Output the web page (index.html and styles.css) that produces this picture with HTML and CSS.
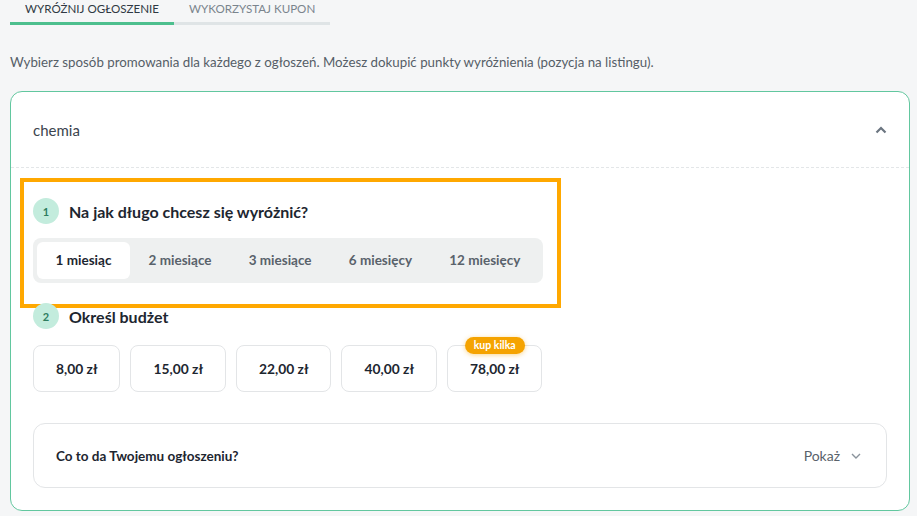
FILE: index.html
```
<!DOCTYPE html>
<html lang="pl">
<head>
    <meta charset="UTF-8">
    <meta name="viewport" content="width=device-width, initial-scale=1.0">
    <title>Wyróżnij ogłoszenie</title>
    <link rel="stylesheet" href="styles.css">
</head>
<body>

<div class="page">
    <div class="tabs">
        <div class="tab active">Wyróżnij ogłoszenie</div>
        <div class="tab">Wykorzystaj kupon</div>
    </div>

    <p class="intro">Wybierz sposób promowania dla każdego z ogłoszeń. Możesz dokupić punkty wyróżnienia (pozycja na listingu).</p>

    <div class="card">
        <div class="card-header">
            <span class="card-title">chemia</span>
            <svg class="chevron" width="12" height="8" viewBox="0 0 12 8"><path d="M1.5 6.5 L6 2 L10.5 6.5" fill="none" stroke="#6b7580" stroke-width="2.2"/></svg>
        </div>

        <div class="card-body">
            <div class="step highlighted">
                <div class="step-head">
                    <span class="step-num">1</span>
                    <span class="step-title">Na jak długo chcesz się wyróżnić?</span>
                </div>
                <div class="segments">
                    <div class="segment selected">1 miesiąc</div>
                    <div class="segment">2 miesiące</div>
                    <div class="segment">3 miesiące</div>
                    <div class="segment">6 miesięcy</div>
                    <div class="segment">12 miesięcy</div>
                </div>
            </div>

            <div class="step">
                <div class="step-head">
                    <span class="step-num">2</span>
                    <span class="step-title">Określ budżet</span>
                </div>
                <div class="budgets">
                    <div class="budget">8,00 zł</div>
                    <div class="budget">15,00 zł</div>
                    <div class="budget">22,00 zł</div>
                    <div class="budget">40,00 zł</div>
                    <div class="budget">78,00 zł<span class="badge">kup kilka</span></div>
                </div>
            </div>

            <div class="info">
                <span class="info-title">Co to da Twojemu ogłoszeniu?</span>
                <span class="info-toggle">Pokaż
                    <svg width="10" height="6" viewBox="0 0 10 6"><path d="M1 1 L5 5 L9 1" fill="none" stroke="#8a939c" stroke-width="1.4"/></svg>
                </span>
            </div>
        </div>
    </div>
</div>

</body>
</html>
```

FILE: styles.css
```
body {
    font-family: Lato, "Noto Sans", sans-serif;
    background-color: #f5f6f7;
    color: #1d2630;
    margin: 0;
    padding: 0;
}

.page {
    padding: 0 7px 0 10px;
}

.tabs {
    display: flex;
    width: 319px;
}

.tab {
    flex: 1 1 auto;
    padding: 2px 15px 7px;
    font-size: 11.6px;
    text-align: center;
    text-transform: uppercase;
    color: #7a848d;
    border-bottom: 3px solid #dfe4e6;
    white-space: nowrap;
}

.tab.active {
    color: #2f3943;
    border-bottom-color: #4dbf8e;
}

.intro {
    margin: 29px 0 21px;
    font-size: 13.3px;
    color: #555e67;
}

.card {
    background-color: #ffffff;
    border: 1px solid #62c79f;
    border-radius: 12px;
}

.card-header {
    display: flex;
    align-items: center;
    justify-content: space-between;
    height: 75px;
    padding: 0 22px 0 22px;
    border-bottom: 1px dashed #e3e6e8;
}

.card-title {
    font-size: 15px;
    color: #3b444e;
}

.card-body {
    padding: 30px 22px 22px;
}

.step {
    position: relative;
    width: 510px;
}

.step + .step {
    margin-top: 20px;
}

.highlighted::after {
    content: "";
    position: absolute;
    top: -20px;
    left: -13px;
    right: -18px;
    bottom: -25px;
    border: 4px solid #ffa800;
    pointer-events: none;
}

.step-head {
    display: flex;
    align-items: center;
    gap: 10px;
    margin-bottom: 14px;
}

.step-num {
    display: flex;
    align-items: center;
    justify-content: center;
    width: 26px;
    height: 26px;
    border-radius: 50%;
    background-color: #c3ecdd;
    color: #2e7d5f;
    font-size: 11px;
    font-weight: bold;
}

.step-title {
    font-size: 16px;
    font-weight: bold;
    color: #1d2630;
}

.segments {
    display: flex;
    padding: 4px;
    background-color: #eef0f0;
    border-radius: 8px;
}

.segment {
    flex: 1 1 auto;
    height: 37px;
    line-height: 37px;
    text-align: center;
    font-size: 13.5px;
    font-weight: bold;
    color: #59626b;
    white-space: nowrap;
    border-radius: 6px;
}

.segment.selected {
    background-color: #ffffff;
    color: #1d2630;
}

.budgets {
    display: flex;
    gap: 10px;
    margin-top: 16px;
}

.budget {
    position: relative;
    height: 45px;
    line-height: 45px;
    padding: 0 22px;
    border: 1px solid #e3e5e7;
    border-radius: 8px;
    font-size: 13.8px;
    font-weight: bold;
    color: #1d2630;
    white-space: nowrap;
}

.badge {
    position: absolute;
    top: -9px;
    left: 50%;
    transform: translateX(-50%);
    height: 17px;
    line-height: 17px;
    padding: 0 9px;
    border-radius: 9px;
    background-color: #f5a300;
    color: #ffffff;
    font-size: 10.5px;
    font-weight: bold;
    box-shadow: 0 1px 5px rgba(245, 163, 0, 0.45);
}

.info {
    display: flex;
    align-items: center;
    justify-content: space-between;
    margin-top: 31px;
    height: 63px;
    padding: 0 25px 0 22px;
    border: 1px solid #e3e5e7;
    border-radius: 12px;
}

.info-title {
    font-size: 13.5px;
    font-weight: bold;
}

.info-toggle {
    display: flex;
    align-items: center;
    gap: 11px;
    font-size: 14px;
    color: #59626b;
}
```
